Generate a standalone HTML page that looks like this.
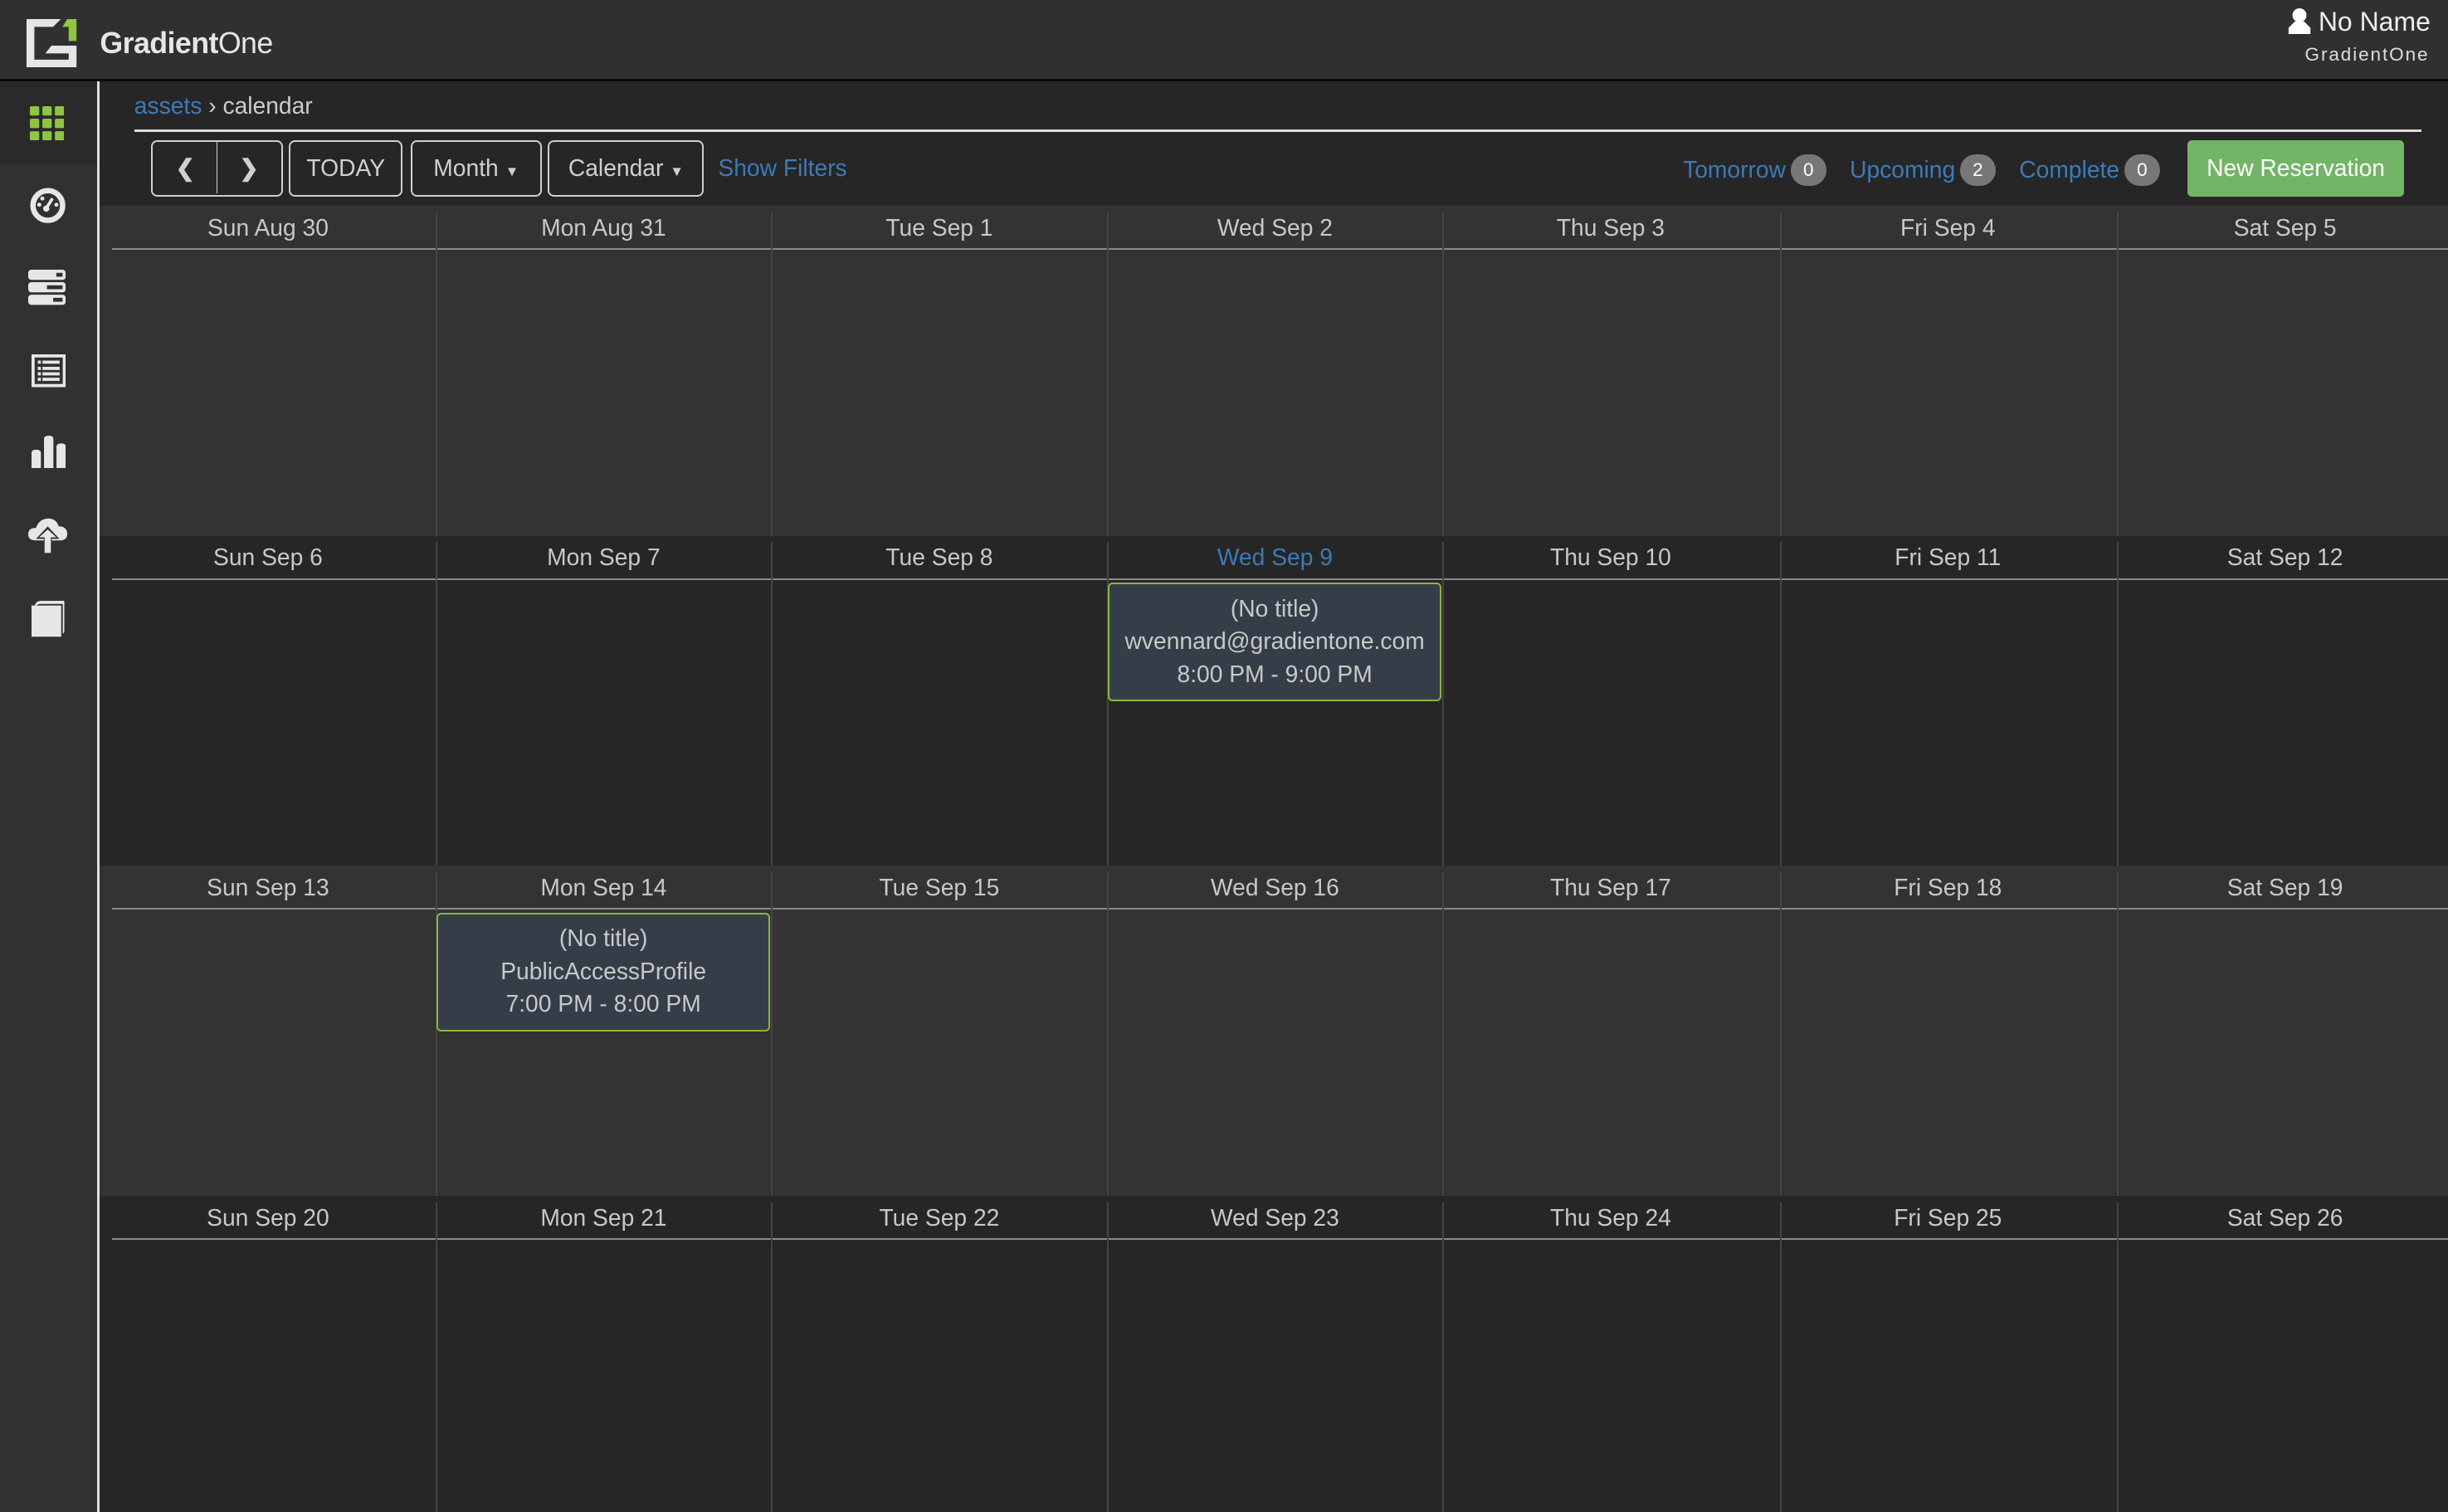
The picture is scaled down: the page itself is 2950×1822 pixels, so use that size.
<!DOCTYPE html>
<html><head><meta charset="utf-8">
<style>
*{box-sizing:border-box;margin:0;padding:0}
html,body{width:2950px;height:1822px;overflow:hidden;background:#262626}
#w{zoom:1.88138;width:1568px;height:968.4px;position:relative;font-family:"Liberation Sans",sans-serif;color:#cfcfcf;overflow:hidden;background:#262626}
.a{position:absolute}
#hdr{left:0;top:0;width:1568px;height:52px;background:#303030;border-bottom:2px solid #0a0a0a}
#side{left:0;top:52px;width:64px;height:920px;background:#313131;border-right:2px solid #e0e0e0}
.btn{position:absolute;top:90px;height:36px;border:1.5px solid #cfcfcf;border-radius:4px;font-size:15px;line-height:33px;text-align:center;color:#d0d0d0}
.lnk{color:#3e7ab8;font-size:15px}
.badge{display:inline-block;background:#777;color:#fff;border-radius:10px;font-size:12px;min-width:23px;height:20px;line-height:20px;text-align:center;vertical-align:1px;margin-left:3px}
.row{position:absolute;left:64px;width:1504px;height:211.3px}
.hd{position:absolute;top:5px;width:215.3px;text-align:center;font-size:15px;color:#c8c8c8}
.vl{position:absolute;top:4px;bottom:0;width:1px;background:#444}
.hl{position:absolute;left:8px;right:0;top:27px;height:1px;background:#8a8a8a}
.ev{position:absolute;top:30px;width:214px;height:76px;background:#353e48;border:1.5px solid #8bb53e;border-radius:3px;text-align:center;font-size:15px;line-height:21px;padding-top:5px;color:#c8c8c8}
</style></head><body><div id="w">
<div id="hdr" class="a">
 <svg class="a" style="left:17px;top:12px" width="33" height="31" viewBox="0 0 33 31"><path d="M0 0H22L17 5H5V26H27V22H12L16 17H32V31H0Z" fill="#e6e6e6"/><path d="M26 0H32V14H27V5H23Z" fill="#8dc63f"/></svg>
 <div class="a" style="left:64px;top:17px;font-size:19px;color:#e6e6e6;letter-spacing:-0.3px"><b>Gradient</b>One</div>
 <svg class="a" style="left:1465px;top:5px" width="16" height="17" viewBox="0 0 16 17"><circle cx="8" cy="5" r="4.5" fill="#fff"/><path d="M5 9H11L15 13V17H1V13Z" fill="#fff"/></svg>
 <div class="a" style="left:1485px;top:4px;font-size:17px;color:#eee">No Name</div>
 <div class="a" style="right:12px;top:28px;font-size:12px;color:#ddd;letter-spacing:1px">GradientOne</div>
</div>
<div id="side" class="a">
 <div class="a" style="left:0;top:0;width:62px;height:53px;background:#2a2a2a"></div>
 <svg class="a" style="left:19px;top:16px" width="22" height="22" viewBox="0 0 22 22" fill="#8dc63f"><rect x="0" y="0" width="6" height="6" rx="1"/><rect x="8" y="0" width="6" height="6" rx="1"/><rect x="16" y="0" width="6" height="6" rx="1"/><rect x="0" y="8" width="6" height="6" rx="1"/><rect x="8" y="8" width="6" height="6" rx="1"/><rect x="16" y="8" width="6" height="6" rx="1"/><rect x="0" y="16" width="6" height="6" rx="1"/><rect x="8" y="16" width="6" height="6" rx="1"/><rect x="16" y="16" width="6" height="6" rx="1"/></svg>
 <svg class="a" style="left:19px;top:68px" width="23" height="23" viewBox="0 0 23 23"><circle cx="11.5" cy="11.5" r="9.5" fill="none" stroke="#e6e6e6" stroke-width="3.5"/><circle cx="6" cy="11" r="1.3" fill="#e6e6e6"/><circle cx="17" cy="11" r="1.3" fill="#e6e6e6"/><circle cx="8" cy="7" r="1.3" fill="#e6e6e6"/><path d="M10 14L14.5 7" stroke="#e6e6e6" stroke-width="2"/><circle cx="10.5" cy="13.5" r="2" fill="#e6e6e6"/></svg>
 <svg class="a" style="left:18px;top:121px" width="24" height="23" viewBox="0 0 24 23" fill="#e6e6e6"><rect x="0" y="0" width="24" height="6.5" rx="2"/><rect x="0" y="8" width="24" height="6.5" rx="2"/><rect x="0" y="16" width="24" height="6.5" rx="2"/><rect x="18" y="2" width="4" height="2.5" fill="#313131"/><rect x="12" y="10" width="10" height="2.5" fill="#313131"/><rect x="16" y="18" width="6" height="2.5" fill="#313131"/></svg>
 <svg class="a" style="left:20px;top:175px" width="22" height="21" viewBox="0 0 22 21"><rect x="0" y="0" width="22" height="21" fill="#e6e6e6"/><rect x="2" y="2" width="18" height="17" fill="#313131"/><g fill="#e6e6e6"><rect x="4" y="4" width="2" height="2"/><rect x="7" y="4" width="11" height="2"/><rect x="4" y="8" width="2" height="2"/><rect x="7" y="8" width="11" height="2"/><rect x="4" y="11.5" width="2" height="2"/><rect x="7" y="11.5" width="11" height="2"/><rect x="4" y="15" width="2" height="2"/><rect x="7" y="15" width="11" height="2"/></g></svg>
 <svg class="a" style="left:20px;top:227px" width="22" height="21" viewBox="0 0 22 21" fill="#e6e6e6"><path d="M0 21V11Q0 9 3 9Q6 9 6 11V21Z"/><path d="M8 21V2Q8 0 11 0Q14 0 14 2V21Z"/><path d="M16 21V7Q16 5 19 5Q22 5 22 7V21Z"/></svg>
 <svg class="a" style="left:18px;top:279px" width="25" height="24" viewBox="0 0 25 24" fill="#e6e6e6"><path d="M5 15Q0 15 0 11Q0 7 5 7Q7 1 13 1Q18 1 19.5 6Q25 6 25 11Q25 15 20 15Z"/><path d="M12.5 6L5 14H10V24H15V14H20Z" fill="#313131"/><path d="M12.5 8L7 13H10.5V23H14.5V13H18Z"/></svg>
 <svg class="a" style="left:20px;top:333px" width="22" height="23" viewBox="0 0 22 23"><path d="M2 3Q3 0 6 0H21V19Q21 21 20 21V2H6Q4 2 3 3Z" fill="#e6e6e6"/><rect x="0" y="3" width="19" height="20" fill="#e6e6e6"/></svg>
</div>
<div class="a" style="left:86px;top:59px;font-size:15px"><span class="lnk">assets</span> <span style="color:#ccc">›</span> <span style="color:#ccc">calendar</span></div>
<div class="a" style="left:86px;top:83px;width:1465px;height:1.5px;background:#ddd"></div>
<div class="btn" style="left:97px;width:84px"><span style="display:inline-block;width:41px;border-right:1px solid #cfcfcf;font-weight:bold">&#10094;</span><span style="display:inline-block;width:40px;font-weight:bold">&#10095;</span></div>
<div class="btn" style="left:185px;width:73px">TODAY</div>
<div class="btn" style="left:263px;width:84px">Month <span style="font-size:9px">▼</span></div>
<div class="btn" style="left:351px;width:100px">Calendar <span style="font-size:9px">▼</span></div>
<div class="a lnk" style="left:460px;top:99px">Show Filters</div>
<div class="a" style="left:1078px;top:99px;font-size:15px"><span class="lnk">Tomorrow</span><span class="badge">0</span><span class="lnk" style="margin-left:15px">Upcoming</span><span class="badge">2</span><span class="lnk" style="margin-left:15px">Complete</span><span class="badge">0</span></div>
<div class="a" style="left:1401px;top:90px;width:139px;height:36px;background:#72b566;border-radius:3px;color:#fff;font-size:15px;line-height:36px;text-align:center">New Reservation</div>

<div class="row" style="top:132px;background:#333">
 <div class="hl"></div>
 <div class="vl" style="left:215px"></div><div class="vl" style="left:430px"></div><div class="vl" style="left:645px"></div><div class="vl" style="left:860px"></div><div class="vl" style="left:1076px"></div><div class="vl" style="left:1292px"></div>
 <div class="hd" style="left:0">Sun Aug 30</div><div class="hd" style="left:215px">Mon Aug 31</div><div class="hd" style="left:430px">Tue Sep 1</div><div class="hd" style="left:645px">Wed Sep 2</div><div class="hd" style="left:860px">Thu Sep 3</div><div class="hd" style="left:1076px">Fri Sep 4</div><div class="hd" style="left:1292px">Sat Sep 5</div>
</div>
<div class="row" style="top:343.3px;background:#262626">
 <div class="hl"></div>
 <div class="vl" style="left:215px"></div><div class="vl" style="left:430px"></div><div class="vl" style="left:645px"></div><div class="vl" style="left:860px"></div><div class="vl" style="left:1076px"></div><div class="vl" style="left:1292px"></div>
 <div class="hd" style="left:0">Sun Sep 6</div><div class="hd" style="left:215px">Mon Sep 7</div><div class="hd" style="left:430px">Tue Sep 8</div><div class="hd" style="left:645px;color:#3e7ab8">Wed Sep 9</div><div class="hd" style="left:860px">Thu Sep 10</div><div class="hd" style="left:1076px">Fri Sep 11</div><div class="hd" style="left:1292px">Sat Sep 12</div>
 <div class="ev" style="left:645.5px">(No title)<br>wvennard@gradientone.com<br>8:00 PM - 9:00 PM</div>
</div>
<div class="row" style="top:554.6px;background:#333">
 <div class="hl"></div>
 <div class="vl" style="left:215px"></div><div class="vl" style="left:430px"></div><div class="vl" style="left:645px"></div><div class="vl" style="left:860px"></div><div class="vl" style="left:1076px"></div><div class="vl" style="left:1292px"></div>
 <div class="hd" style="left:0">Sun Sep 13</div><div class="hd" style="left:215px">Mon Sep 14</div><div class="hd" style="left:430px">Tue Sep 15</div><div class="hd" style="left:645px">Wed Sep 16</div><div class="hd" style="left:860px">Thu Sep 17</div><div class="hd" style="left:1076px">Fri Sep 18</div><div class="hd" style="left:1292px">Sat Sep 19</div>
 <div class="ev" style="left:215.5px">(No title)<br>PublicAccessProfile<br>7:00 PM - 8:00 PM</div>
</div>
<div class="row" style="top:766px;background:#262626;height:210px">
 <div class="hl"></div>
 <div class="vl" style="left:215px"></div><div class="vl" style="left:430px"></div><div class="vl" style="left:645px"></div><div class="vl" style="left:860px"></div><div class="vl" style="left:1076px"></div><div class="vl" style="left:1292px"></div>
 <div class="hd" style="left:0">Sun Sep 20</div><div class="hd" style="left:215px">Mon Sep 21</div><div class="hd" style="left:430px">Tue Sep 22</div><div class="hd" style="left:645px">Wed Sep 23</div><div class="hd" style="left:860px">Thu Sep 24</div><div class="hd" style="left:1076px">Fri Sep 25</div><div class="hd" style="left:1292px">Sat Sep 26</div>
</div>
</div></body></html>
